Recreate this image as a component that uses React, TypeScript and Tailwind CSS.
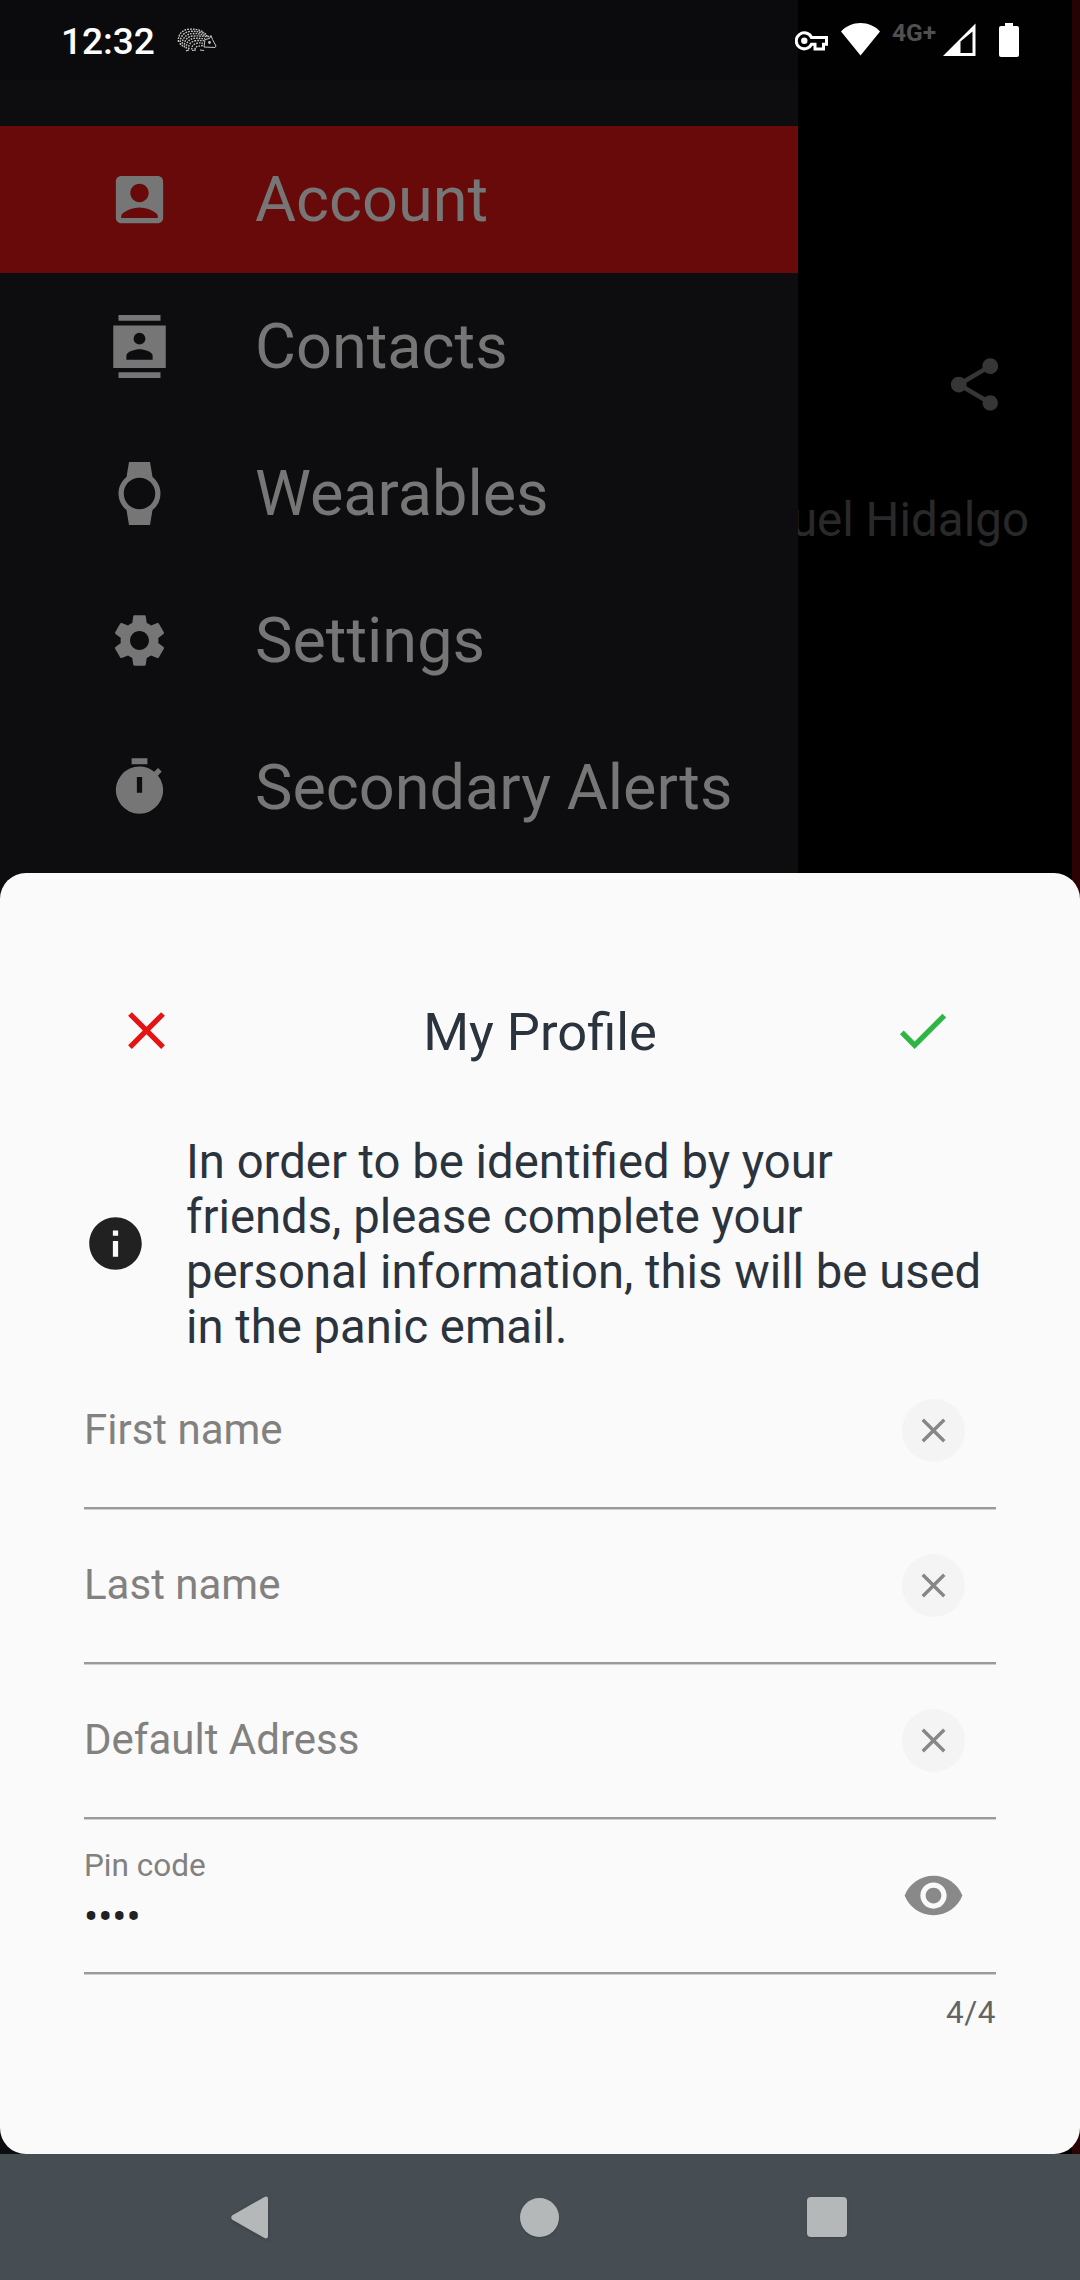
import type { ReactNode } from "react";
import {
  MdAccountBox,
  MdCheck,
  MdClose,
  MdInfo,
  MdSettings,
  MdShare,
  MdVisibility,
  MdWatch,
} from "react-icons/md";

function ContactsIcon() {
  return (
    <svg viewBox="0 0 24 24" className="size-[63px]" fill="currentColor" fillRule="evenodd">
      <path d="M4 0h16v2.200H4zM4 21.800h16V24H4zM2 4h20v16.200H2zM12 6.750a2.250 2.250 0 1 0 0 4.500a2.250 2.250 0 0 0 0-4.500zM17 17v-1.500c0-1.670-3.330-2.500-5-2.500s-5 .83-5 2.500V17z" />
    </svg>
  );
}

function TimerIcon() {
  return (
    <svg viewBox="0 0 24 24" className="size-[63px]" fill="currentColor" fillRule="evenodd">
      <path d="M9 .9h6v2.200H9zM19.030 7.390l1.420-1.420c-.43-.51-.9-.99-1.410-1.410l-1.420 1.420A8.960 8.960 0 0 0 12 4a9 9 0 1 0 7.030 3.390zM13 14h-2V8h2z" />
    </svg>
  );
}

function HedgehogIcon() {
  return (
    <svg viewBox="0 0 40 24" className="h-6 w-10" fill="none" stroke="#c4c4c4" strokeWidth="1.400">
      <path d="M1.500 14C.5 6 6 1.500 12 1.200S22 1.500 27 4.500" strokeDasharray="1.800 1" />
      <path d="M3.500 17C2 9 7 4 13 3.400S23 4 29 6" strokeDasharray="1.800 1" />
      <path d="M5.500 18.500C4 11 9 6 15 5.600S25 6.500 31 8" strokeDasharray="1.600 1.100" />
      <path d="M7.500 19.500C6.500 13 10 8.500 16 8S25 8.500 33 8.500" strokeDasharray="1.800 1" />
      <path d="M9.500 20.500C8.500 15 12 11 17 10.400S24 11 28 10.500" strokeDasharray="1.600 1.100" />
      <path d="M12 21.500C10.500 17 14 13.500 18 12.800S24 13 27 12.500" strokeDasharray="1.800 1" />
      <path d="M15 21.500C14 18 17 16 20 15.200S24 15.500 26.500 15" strokeDasharray="1.600 1.100" />
      <path d="M18 21.500C18 19 20 18 26 17.500" strokeDasharray="1.600 1.100" />
      <path d="M9 22.800l3-.8M15 22.500l4-.5M23 22l4 .5" strokeWidth="1.200" />
      <path d="M27 19l11 .5l1-1.500l-3.500-6.500l-1.500-4l-1.500 3l-4.500 1z" strokeWidth="1" />
      <circle cx="32.500" cy="14.500" r=".7" />
    </svg>
  );
}

function StatusBar() {
  return (
    <div className="absolute inset-x-0 top-0 flex h-[81px] items-start bg-[#05050533] text-white">
      <span className="ml-[61px] mt-5 w-[116px] text-[37px] font-medium leading-[44px]">12:32</span>
      <div className="mt-[28px] w-[618px]">
        <HedgehogIcon />
      </div>
      <svg viewBox="0 0 33 20" className="mt-[31px] h-5 w-[33px]" fill="none" stroke="white">
        <path
          strokeWidth="3"
          strokeLinejoin="miter"
          d="M16.500 6.500A8 8 0 1 0 16.500 13.200h3.500v4.800h8.500V13.200h3V6.500z"
        />
        <circle cx="9.300" cy="9.800" r="3.200" fill="white" stroke="none" />
      </svg>
      <svg viewBox="0 0 39 33" className="ml-[13px] mt-[23px] h-[33px] w-[39px]" fill="white">
        <path d="M19.500 32.500L0 8.500C5 3 12 0 19.500 0S34 3 39 8.500z" />
      </svg>
      <span className="ml-[12px] mt-[19px] w-[51px] text-[24.500px] font-bold leading-[28px] text-[#505050]">
        4G+
      </span>
      <svg viewBox="0 0 33 33" className="mt-[23px] h-[33px] w-[33px]" fill="white" fillRule="evenodd">
        <path d="M0 33L32.500 .5V33zM17.500 18.500v11.500h12V8.500z" />
      </svg>
      <svg viewBox="0 0 20 34" className="ml-[23px] mt-[23px] h-[34px] w-5" fill="white">
        <path d="M6 0h8v3h4a2 2 0 0 1 2 2v27a2 2 0 0 1-2 2H2a2 2 0 0 1-2-2V5a2 2 0 0 1 2-2h4z" />
      </svg>
    </div>
  );
}

function MenuItem({ icon, label, active = false }: { icon: ReactNode; label: string; active?: boolean }) {
  return (
    <li
      className={`flex h-[147px] items-center gap-[84px] pl-[108px] text-[#767676] ${
        active ? "bg-[#690a0a]" : ""
      }`}
    >
      {icon}
      <span className="text-[63px] leading-[74px]">{label}</span>
    </li>
  );
}

function Drawer() {
  return (
    <nav className="w-[798px] shrink-0 bg-[#0d0d0f] pt-[126px]">
      <ul>
        <MenuItem active icon={<MdAccountBox className="size-[63px]" />} label="Account" />
        <MenuItem icon={<ContactsIcon />} label="Contacts" />
        <MenuItem icon={<MdWatch className="size-[63px]" />} label="Wearables" />
        <MenuItem icon={<MdSettings className="size-[63px]" />} label="Settings" />
        <MenuItem icon={<TimerIcon />} label="Secondary Alerts" />
      </ul>
    </nav>
  );
}

function PageBehind() {
  return (
    <div className="flex w-[274px] flex-col items-end overflow-hidden bg-black pt-[353px]">
      <MdShare className="mr-[66px] size-[63px] text-[#363636]" />
      <span className="mr-[43px] mt-[76px] whitespace-nowrap text-[47.500px] leading-[56px] text-[#292929]">
        uel Hidalgo
      </span>
    </div>
  );
}

function ClearableField({ label }: { label: string }) {
  return (
    <div className="flex h-[155px] items-center justify-between border-b-2 border-[#9a9a9a] pr-[31px] shadow-[0_1px_0_#d0d0d0]">
      <span className="mb-0.5 text-[42px] leading-[50px] text-[#828180]">{label}</span>
      <span className="flex size-[63px] items-center justify-center rounded-full bg-[#f4f4f4] text-[#878787]">
        <MdClose className="size-[41px]" />
      </span>
    </div>
  );
}

function PinField() {
  return (
    <div className="flex h-[155px] items-center justify-between border-b-2 border-[#9a9a9a] pr-[31px] shadow-[0_1px_0_#d0d0d0]">
      <div className="mb-0.5 flex flex-col">
        <span className="text-[31.500px] leading-[37px] text-[#828180]">Pin code</span>
        <span className="mt-2 text-[42px] leading-[50px] text-[#212121]">••••</span>
      </div>
      <MdVisibility className="size-[63px] text-[#898989]" />
    </div>
  );
}

function ProfileSheet() {
  return (
    <section className="absolute inset-x-0 top-[873px] h-[1281px] rounded-[26px] bg-[#fafafa] px-[84px] pt-[126px]">
      <header className="grid h-[63px] grid-cols-[1fr_auto_1fr] items-center">
        <MdClose className="ml-[31px] size-[63px] text-[#e51414]" />
        <h1 className="pt-[3px] text-[52.500px] leading-[60px] text-[#2b333d]">My Profile</h1>
        <MdCheck className="mr-[42px] size-[63px] justify-self-end text-[#2db742]" />
      </header>
      <div className="mt-[72px] flex items-start gap-[39px]">
        <MdInfo className="mt-[77.500px] size-[63px] shrink-0 text-[#212121]" />
        <p className="w-[810px] pt-px text-[47.250px] leading-[55px] text-[#2b333d]">
          In order to be identified by your friends, please complete your personal information, this will be
          used in the panic email.
        </p>
      </div>
      <div className="-mt-px">
        <ClearableField label="First name" />
        <ClearableField label="Last name" />
        <ClearableField label="Default Adress" />
        <PinField />
      </div>
      <p className="mt-[20px] text-right text-[31.500px] leading-[37px] tracking-[0.500px] text-[#646464]">
        4/4
      </p>
    </section>
  );
}

function NavigationBar() {
  return (
    <div className="absolute inset-x-0 bottom-0 flex h-[126px] items-center bg-[#464d53] text-[#b4b8b9]">
      <svg viewBox="0 0 38 43" className="ml-[231px] h-[43px] w-[38px] drop-shadow-sm" fill="currentColor">
        <path d="M1 19.500L33.500 1Q37 -.5 37 3V40Q37 43.500 33.500 42L1 23.500Q-.5 21.500 1 19.500z" />
      </svg>
      <span className="ml-[251px] size-[39px] rounded-full bg-[#b4b8b9] shadow-sm" />
      <span className="ml-[248px] size-10 rounded-[4px] bg-[#b4b8b9] shadow-sm" />
    </div>
  );
}

export default function App() {
  return (
    <main className="relative h-[2280px] w-[1080px] overflow-hidden bg-[#2d0204] font-['Roboto',sans-serif]">
      <div className="flex h-full">
        <Drawer />
        <PageBehind />
      </div>
      <StatusBar />
      <ProfileSheet />
      <NavigationBar />
    </main>
  );
}
